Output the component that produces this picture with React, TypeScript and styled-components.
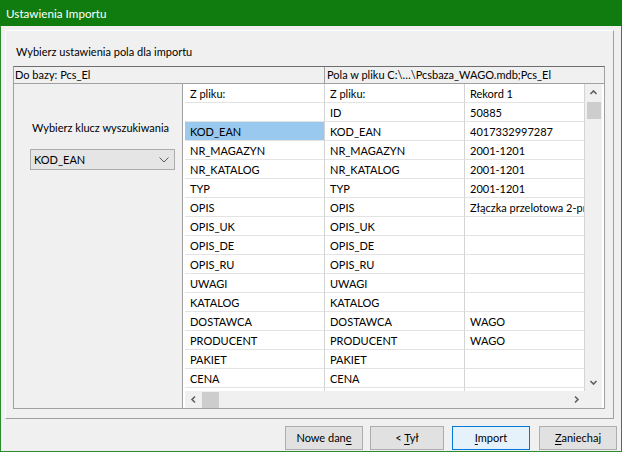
import React from "react";
import styled, { createGlobalStyle } from "styled-components";

const Global = createGlobalStyle`
  html, body { margin: 0; padding: 0; background: #ffffff; }
  * { box-sizing: border-box; }
`;

const FONT = `Lato, "Noto Sans", sans-serif`;

const Window = styled.div`
  width: 622px;
  height: 452px;
  display: flex;
  flex-direction: column;
  background: #f0f0f0;
  border: 1px solid #2b8a2b;
  border-top: none;
  font-family: ${FONT};
  font-size: 11px;
  color: #000;
`;

const TitleBar = styled.div`
  height: 26px;
  margin: 0 -1px;
  padding-left: 6px;
  display: flex;
  align-items: center;
  background: #107c10;
  color: #ffffff;
  font-size: 11.7px;
`;

const Body = styled.div`
  flex: 1;
  display: flex;
  flex-direction: column;
  padding: 4px 4px 0 4px;
`;

const Frame = styled.div`
  height: 389px;
  margin-right: 3px;
  display: flex;
  flex-direction: column;
  border: 1px solid;
  border-color: #ffffff #a0a0a0 #a0a0a0 #ffffff;
  padding: 13px 8px 8px 7px;
`;

const Heading = styled.div`
  height: 16px;
  line-height: 16px;
  padding-left: 3px;
`;

const HeaderBar = styled.div`
  margin-top: 6px;
  height: 18px;
  display: grid;
  grid-template-columns: 310px 1fr;
  border: 1px solid #a0a0a0;
  border-top-color: #6e6e6e;
`;

const HeaderCell = styled.div<{ $sep?: boolean }>`
  line-height: 16px;
  padding-left: ${(p) => (p.$sep ? 2 : 1)}px;
  white-space: nowrap;
  overflow: hidden;
  border-left: ${(p) => (p.$sep ? "1px solid #a0a0a0" : "none")};
`;

const Main = styled.div`
  height: 325px;
  display: flex;
`;

const LeftPanel = styled.div`
  width: 170px;
  display: flex;
  flex-direction: column;
  align-items: flex-start;
  padding: 36px 0 0 16px;
  border-left: 1px solid #a0a0a0;
  border-right: 1px solid #a0a0a0;
  border-bottom: 1px solid #a0a0a0;
`;

const Label = styled.div`
  line-height: 16px;
  padding-left: 2px;
  margin-bottom: 13px;
`;

const Combo = styled.div`
  width: 145px;
  height: 21px;
  display: flex;
  align-items: center;
  justify-content: space-between;
  padding: 0 5px 0 3px;
  background: #e5e5e5;
  border: 1px solid #acacac;
`;

const Grid = styled.div`
  flex: 1;
  display: flex;
  flex-direction: column;
  background: #ffffff;
  border-right: 1px solid #a0a0a0;
  border-bottom: 1px solid #a0a0a0;
  padding-right: 2px;
`;

const GridTop = styled.div`
  height: 307px;
  display: flex;
`;

const Table = styled.div`
  flex: 1;
  padding-left: 2px;
  overflow: hidden;
  display: flex;
  flex-direction: column;
`;

const Row = styled.div`
  flex: none;
  height: 19px;
  display: grid;
  grid-template-columns: 140px 140px 120px;
`;

const Cell = styled.div<{ $sel?: boolean }>`
  padding-left: 5px;
  line-height: 19px;
  white-space: nowrap;
  overflow: hidden;
  border-bottom: 1px solid #e3e3e3;
  border-right: 1px solid #d4d4d4;
  background: ${(p) => (p.$sel ? "#99c9ef" : "transparent")};
`;

const VScroll = styled.div`
  width: 17px;
  display: flex;
  flex-direction: column;
  background: #f0f0f0;
`;

const ArrowBox = styled.div`
  flex: none;
  width: 17px;
  height: 17px;
  display: flex;
  align-items: center;
  justify-content: center;
`;

const VThumb = styled.div`
  height: 17px;
  margin: 1px 1px 0 2px;
  background: #cdcdcd;
`;

const Spacer = styled.div`
  flex: 1;
`;

const HRow = styled.div`
  height: 17px;
  display: flex;
  padding-left: 2px;
`;

const HScroll = styled.div`
  flex: 1;
  display: flex;
  align-items: stretch;
  background: #f0f0f0;
`;

const HThumb = styled.div`
  width: 17px;
  margin: 1px 0 0 0;
  background: #cdcdcd;
`;

const Corner = styled.div`
  width: 17px;
  background: #f0f0f0;
`;

const ButtonRow = styled.div`
  margin-top: 7px;
  display: flex;
  justify-content: flex-end;
  gap: 7px;
`;

const Button = styled.div<{ $w: number; $def?: boolean; $ml?: number }>`
  width: ${(p) => p.$w}px;
  height: 24px;
  margin-left: ${(p) => p.$ml ?? 0}px;
  text-align: center;
  line-height: 22px;
  white-space: pre;
  background: ${(p) => (p.$def ? "#e5f1fb" : "#e1e1e1")};
  border: 1px solid ${(p) => (p.$def ? "#0078d7" : "#adadad")};
`;

const Mn = styled.span`
  text-decoration: underline;
  text-underline-offset: 2px;
`;

const Chevron = ({ dir }: { dir: "up" | "down" | "left" | "right" }) => {
  const pts: Record<string, string> = {
    up: "1.5,6 4.5,3 7.5,6",
    down: "1.5,3 4.5,6 7.5,3",
    left: "6,1.5 3,4.5 6,7.5",
    right: "3,1.5 6,4.5 3,7.5",
  };
  return (
    <svg width="9" height="9" viewBox="0 0 9 9">
      <polyline points={pts[dir]} fill="none" stroke="#606060" strokeWidth="1.6" />
    </svg>
  );
};

const ComboChevron = () => (
  <svg width="10" height="6" viewBox="0 0 10 6">
    <polyline points="0.5,0.5 5,5 9.5,0.5" fill="none" stroke="#5a5a5a" strokeWidth="1" />
  </svg>
);

type R = [string, string, string, boolean?];
const rows: R[] = [
  ["Z pliku:", "Z pliku:", "Rekord 1"],
  ["", "ID", "50885"],
  ["KOD_EAN", "KOD_EAN", "4017332997287", true],
  ["NR_MAGAZYN", "NR_MAGAZYN", "2001-1201"],
  ["NR_KATALOG", "NR_KATALOG", "2001-1201"],
  ["TYP", "TYP", "2001-1201"],
  ["OPIS", "OPIS", "Złączka przelotowa 2-przewodowa"],
  ["OPIS_UK", "OPIS_UK", ""],
  ["OPIS_DE", "OPIS_DE", ""],
  ["OPIS_RU", "OPIS_RU", ""],
  ["UWAGI", "UWAGI", ""],
  ["KATALOG", "KATALOG", ""],
  ["DOSTAWCA", "DOSTAWCA", "WAGO"],
  ["PRODUCENT", "PRODUCENT", "WAGO"],
  ["PAKIET", "PAKIET", ""],
  ["CENA", "CENA", ""],
  ["", "", ""],
];

export default function App() {
  return (
    <>
      <Global />
      <Window>
        <TitleBar>Ustawienia Importu</TitleBar>
        <Body>
          <Frame>
            <Heading>Wybierz ustawienia pola dla importu</Heading>
            <HeaderBar>
              <HeaderCell>Do bazy: Pcs_El</HeaderCell>
              <HeaderCell $sep>Pola w pliku C:\…\Pcsbaza_WAGO.mdb;Pcs_El</HeaderCell>
            </HeaderBar>
            <Main>
              <LeftPanel>
                <Label>Wybierz klucz wyszukiwania</Label>
                <Combo>
                  <span>KOD_EAN</span>
                  <ComboChevron />
                </Combo>
              </LeftPanel>
              <Grid>
                <GridTop>
                  <Table>
                    {rows.map((r, i) => (
                      <Row key={i}>
                        <Cell $sel={r[3]}>{r[0]}</Cell>
                        <Cell>{r[1]}</Cell>
                        <Cell>{r[2]}</Cell>
                      </Row>
                    ))}
                  </Table>
                  <VScroll>
                    <ArrowBox>
                      <Chevron dir="up" />
                    </ArrowBox>
                    <VThumb />
                    <Spacer />
                    <ArrowBox>
                      <Chevron dir="down" />
                    </ArrowBox>
                  </VScroll>
                </GridTop>
                <HRow>
                  <HScroll>
                    <ArrowBox>
                      <Chevron dir="left" />
                    </ArrowBox>
                    <HThumb />
                    <Spacer />
                    <ArrowBox>
                      <Chevron dir="right" />
                    </ArrowBox>
                  </HScroll>
                  <Corner />
                </HRow>
              </Grid>
            </Main>
          </Frame>
          <ButtonRow>
            <Button $w={78}>
              {"Nowe dan"}<Mn>e</Mn>
            </Button>
            <Button $w={74}>
              {"< "}<Mn>T</Mn>{"ył"}
            </Button>
            <Button $w={78} $def $ml={1}>
              <Mn>I</Mn>{"mport"}
            </Button>
            <Button $w={78} $ml={2}>
              <Mn>Z</Mn>{"aniechaj"}
            </Button>
          </ButtonRow>
        </Body>
      </Window>
    </>
  );
}
